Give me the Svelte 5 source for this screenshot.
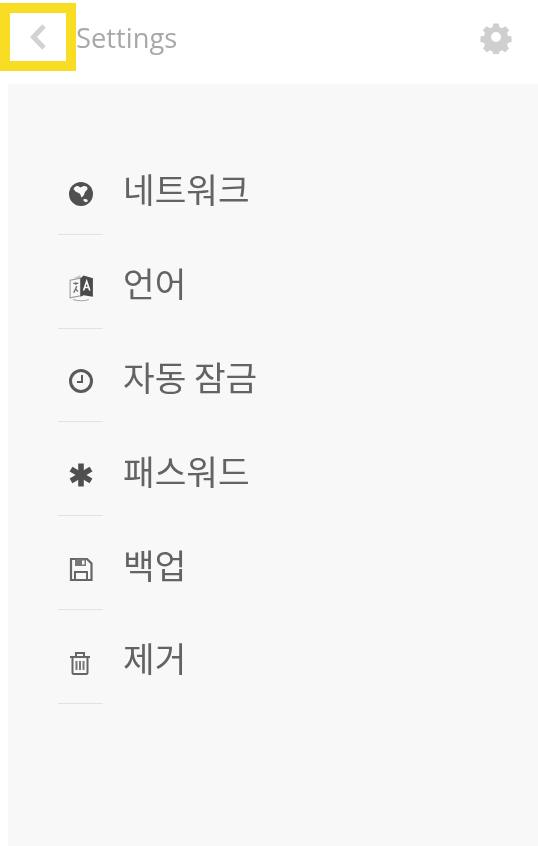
<script lang="ts">
  const items = [
    { key: 'globe', label: '네트워크' },
    { key: 'lang', label: '언어' },
    { key: 'clock', label: '자동 잠금' },
    { key: 'asterisk', label: '패스워드' },
    { key: 'save', label: '백업' },
    { key: 'trash', label: '제거' }
  ];
</script>

<div class="page">
  <header class="topbar">
    <button type="button" class="back" aria-label="Back">
      <svg class="soft" width="18" height="28" viewBox="0 0 18 28">
        <path d="M15 3 L4.500 14 L15 25" fill="none" stroke="#d2d2d2" stroke-width="5" />
      </svg>
    </button>
    <span class="title soft">Settings</span>
    <svg class="gear soft" width="34" height="34" viewBox="0 0 34 34">
      <path
        fill="#cfcfcf"
        fill-rule="evenodd"
        d="M14 2h6l1 4.200 2.600 1.100 3.700-2.300 4.200 4.200-2.300 3.700 1.100 2.600 4 1v6l-4 1-1.100 2.600 2.300 3.700-4.200 4.200-3.700-2.300-2.600 1.100-1 4.200h-6l-1-4.200-2.600-1.100-3.700 2.300-4.200-4.200 2.300-3.700-1.100-2.600-4-1v-6l4-1 1.100-2.600-2.300-3.700 4.200-4.200 3.700 2.300 2.600-1.100z M17 11.500a5.500 5.500 0 1 0 0 11 5.500 5.500 0 0 0 0-11z"
        transform="translate(1.700 1.700) scale(0.9)"
      />
    </svg>
  </header>

  <main class="panel">
    <ul class="menu">
      {#each items as item}
        <li class="row">
          <span class="icon soft">
            {#if item.key === 'globe'}
              <svg width="24" height="24" viewBox="0 0 24 24">
                <circle cx="12" cy="12" r="12" fill="#505050" />
                <path fill="#f8f8f8" d="M4.500 7c.5-2 2.500-3.500 4.500-3l2.500 1.500 2.500-1.300c2.500-.5 5 .5 4.500 3l-2.500 2.800-1.300 3.500-2.200 2-1.500-3.800-4.500-2.200z" />
                <path fill="#f8f8f8" d="M14.500 17l3.500.3 1 2-2.500 1-2-1.500z" />
              </svg>
            {:else if item.key === 'lang'}
              <svg width="25" height="29" viewBox="0 0 24 28">
                <path fill="#c9c9c9" d="M4 5l7-3v3z" />
                <path fill="none" stroke="#9a9a9a" stroke-width="1" d="M1 7l10-2v17l-10 2z" />
                <path fill="#4a4a4a" d="M11 5l3-2.500 9 2.500v18l-9-1.500-3 1.500z" />
                <path fill="none" stroke="#f8f8f8" stroke-width="1.600" d="M14 17l3-9 3 9M15 14h4" />
                <path fill="none" stroke="#707070" stroke-width="1.300" d="M4 10h5M6.500 9v2.500M4.500 19l3-6.500M6 15l2.500 3" />
                <path fill="none" stroke="#a8a8a8" stroke-width="1" d="M4 25.500c4 1.800 11 1.800 15 0" />
              </svg>
            {:else if item.key === 'clock'}
              <svg width="24" height="24" viewBox="0 0 24 24">
                <circle cx="12" cy="12" r="10.500" fill="none" stroke="#5a5a5a" stroke-width="3" />
                <path fill="none" stroke="#5a5a5a" stroke-width="2" d="M13 6v7H8" />
              </svg>
            {:else if item.key === 'asterisk'}
              <svg width="24" height="24" viewBox="0 0 24 24">
                <g stroke="#4f4f4f" stroke-width="5.600">
                  <path d="M12 0.500v23" />
                  <path d="M2 6.200l20 11.600" />
                  <path d="M22 6.200l-20 11.600" />
                </g>
              </svg>
            {:else if item.key === 'save'}
              <svg width="24" height="25" viewBox="0 0 24 25">
                <path fill="none" stroke="#666" stroke-width="2.200" d="M2 2h16l4.500 4.500V23H2z" />
                <path fill="#777" d="M6 2h11v7H6z" />
                <path fill="#f8f8f8" d="M13 3.500h2.500v4H13z" />
                <path fill="none" stroke="#666" stroke-width="2" d="M6 23v-8h12v8" />
              </svg>
            {:else}
              <svg width="22" height="24" viewBox="0 0 22 24">
                <path fill="none" stroke="#666" stroke-width="2" d="M1 6h20M7 6V2h8v4" />
                <path fill="none" stroke="#666" stroke-width="2" d="M3.500 6v15.500a1.500 1.500 0 0 0 1.500 1.500h12a1.500 1.500 0 0 0 1.500-1.500V6" />
                <path fill="none" stroke="#777" stroke-width="2" d="M7.500 10v9M11 10v9M14.500 10v9" />
              </svg>
            {/if}
          </span>
          <span class="label soft">{item.label}</span>
        </li>
      {/each}
    </ul>
  </main>
</div>

<style>
  :global(body) {
    margin: 0;
    background: #fff;
  }
  .page {
    width: 538px;
    height: 846px;
    display: flex;
    flex-direction: column;
    overflow: hidden;
  }
  .soft {
    filter: blur(0.45px);
  }
  .topbar {
    flex: 0 0 84px;
    height: 84px;
    display: flex;
    align-items: flex-start;
    box-sizing: border-box;
    padding: 3px 25px 0 0;
    background: #fff;
  }
  .back {
    width: 76px;
    height: 68px;
    box-sizing: border-box;
    border: 10px solid #f9dd24;
    background: #fff;
    padding: 0 0 0 19px;
    display: flex;
    align-items: center;
  }
  .title {
    font-family: "Open Sans", sans-serif;
    font-size: 27.300px;
    line-height: 34px;
    color: #a8a8a8;
    margin-top: 18px;
  }
  .gear {
    margin: 17px 0 0 auto;
  }
  .panel {
    flex: 1;
    margin-left: 8px;
    background: #f8f8f8;
    padding: 57px 0 0 50px;
  }
  .menu {
    list-style: none;
    margin: 0;
    padding: 0;
  }
  .row {
    position: relative;
    height: 93.800px;
    display: flex;
    align-items: center;
  }
  .row::after {
    content: '';
    position: absolute;
    left: 0;
    bottom: 0;
    width: 45px;
    height: 1px;
    background: #e2e2e2;
  }
  .icon {
    width: 65px;
    padding-left: 11px;
    box-sizing: border-box;
    display: flex;
    align-items: center;
    margin-top: 12px;
  }
  .label {
    font-family: "Noto Sans CJK KR", sans-serif;
    font-size: 34.400px;
    line-height: 44px;
    font-weight: 400;
    color: #636363;
    margin-top: 1px;
  }
</style>
